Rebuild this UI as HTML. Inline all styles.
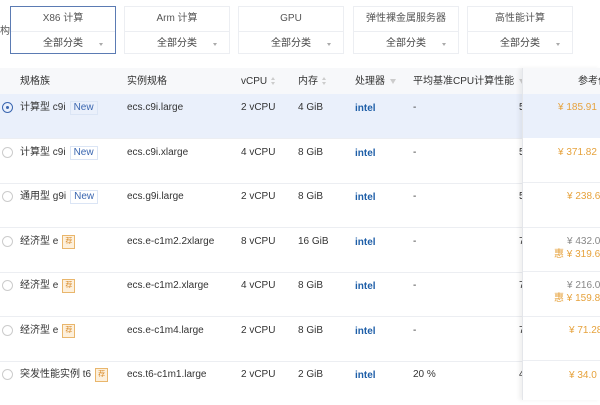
<html><head><style>
body{margin:0;width:600px;height:400px;overflow:hidden;background:#fff;font-family:"Liberation Sans","Noto Sans CJK SC",sans-serif;font-size:10px;color:#333;position:relative}
.a{position:absolute;white-space:nowrap;line-height:13px;height:13px}
.card{position:absolute;top:6px;width:106px;height:48px;border:1px solid #eceef2;box-sizing:border-box;background:#fff}
.card .t{height:24px;line-height:24px;text-align:center;border-bottom:1px solid #eceef2;color:#555;font-size:10px}
.card .s{height:23px;line-height:23px;text-align:center;color:#444;font-size:10px;position:relative}
.card .s:after{content:"";position:absolute;right:12px;top:11px;border:2.5px solid transparent;border-top:3px solid #aaa}
.sel{border:1.5px solid #5b7bb3}
.row{position:absolute;left:0;width:600px;height:44px;border-bottom:1px solid #eceef2}
.radio{position:absolute;left:2px;width:11px;height:11px;border:1px solid #ccc;border-radius:50%;box-sizing:border-box}
.new{display:inline-block;vertical-align:top;border:1px solid #dbe5f5;color:#3a66b0;padding:0 3px;line-height:12px;margin-left:4px;font-size:10px}
.rec{display:inline-block;vertical-align:top;border:1px solid #e9b66c;background:#fdf0dc;color:#d98b2a;width:11px;height:12px;line-height:12px;text-align:center;font-size:7px;margin-left:4px}
.intel{color:#1f5fa8;font-weight:bold;font-size:10px}
.h{color:#333}
.srt{display:inline-block;vertical-align:top;margin-left:4px;width:5px;height:13px;position:relative}
.srt:before{content:"";position:absolute;left:0;top:2px;border:2.5px solid transparent;border-bottom:3px solid #ccc;border-top:0}
.srt:after{content:"";position:absolute;left:0;top:7px;border:2.5px solid transparent;border-top:3px solid #ccc;border-bottom:0}
.flt{display:inline-block;vertical-align:top;margin:4px 0 0 5px;border:3.5px solid transparent;border-top:5px solid #ccc;border-bottom:0}
.fix{position:absolute;left:522px;top:68px;width:78px;height:332px;border-left:1px solid #e4e6ea;box-shadow:-3px 0 4px rgba(0,0,0,.06);background:#fff}
</style></head><body>
<div class="a" style="left:0;top:25px;color:#555">构</div>
<div class="card sel" style="left:10px"><div class="t">X86 计算</div><div class="s">全部分类</div></div>
<div class="card" style="left:124px"><div class="t">Arm 计算</div><div class="s">全部分类</div></div>
<div class="card" style="left:238px"><div class="t">GPU</div><div class="s">全部分类</div></div>
<div class="card" style="left:353px"><div class="t">弹性裸金属服务器</div><div class="s">全部分类</div></div>
<div class="card" style="left:467px"><div class="t">高性能计算</div><div class="s">全部分类</div></div>

<div class="a" style="left:0;top:68px;width:600px;height:26px;background:#f7f8fa;border-bottom:1px solid #eceef2"></div>
<div class="a h" style="left:20px;top:75px">规格族</div>
<div class="a h" style="left:127px;top:75px">实例规格</div>
<div class="a h" style="left:241px;top:75px">vCPU<span class="srt"></span></div>
<div class="a h" style="left:298px;top:75px">内存<span class="srt"></span></div>
<div class="a h" style="left:355px;top:75px">处理器<span class="flt"></span></div>
<div class="a h" style="left:413px;top:75px">平均基准CPU计算性能<span class="flt"></span> 1</div>

<div class="row" style="top:94px;background:#eaf0fb"></div>
<div class="row" style="top:139px"></div>
<div class="row" style="top:183px"></div>
<div class="row" style="top:228px"></div>
<div class="row" style="top:272px"></div>
<div class="row" style="top:317px"></div>
<div class="row" style="top:361px;border:0"></div>

<div class="radio" style="top:102px;border:1.5px solid #3a66b0"><div style="position:absolute;left:2.5px;top:2.5px;width:3.5px;height:3.5px;border-radius:50%;background:#3a66b0"></div></div>
<div class="radio" style="top:147px"></div><div class="radio" style="top:191px"></div><div class="radio" style="top:236px"></div><div class="radio" style="top:280px"></div><div class="radio" style="top:325px"></div><div class="radio" style="top:369px"></div>

<div class="a" style="left:20px;top:101px">计算型 c9i<span class="new">New</span></div>
<div class="a" style="left:20px;top:146px">计算型 c9i<span class="new">New</span></div>
<div class="a" style="left:20px;top:190px">通用型 g9i<span class="new">New</span></div>
<div class="a" style="left:20px;top:235px">经济型 e<span class="rec">荐</span></div>
<div class="a" style="left:20px;top:279px">经济型 e<span class="rec">荐</span></div>
<div class="a" style="left:20px;top:324px">经济型 e<span class="rec">荐</span></div>
<div class="a" style="left:20px;top:368px">突发性能实例 t6<span class="rec">荐</span></div>

<div class="a" style="left:127px;top:101px">ecs.c9i.large</div>
<div class="a" style="left:127px;top:146px">ecs.c9i.xlarge</div>
<div class="a" style="left:127px;top:190px">ecs.g9i.large</div>
<div class="a" style="left:127px;top:235px">ecs.e-c1m2.2xlarge</div>
<div class="a" style="left:127px;top:279px">ecs.e-c1m2.xlarge</div>
<div class="a" style="left:127px;top:324px">ecs.e-c1m4.large</div>
<div class="a" style="left:127px;top:368px">ecs.t6-c1m1.large</div>

<div class="a" style="left:241px;top:101px">2 vCPU</div><div class="a" style="left:298px;top:101px">4 GiB</div>
<div class="a" style="left:241px;top:146px">4 vCPU</div><div class="a" style="left:298px;top:146px">8 GiB</div>
<div class="a" style="left:241px;top:190px">2 vCPU</div><div class="a" style="left:298px;top:190px">8 GiB</div>
<div class="a" style="left:241px;top:235px">8 vCPU</div><div class="a" style="left:298px;top:235px">16 GiB</div>
<div class="a" style="left:241px;top:279px">4 vCPU</div><div class="a" style="left:298px;top:279px">8 GiB</div>
<div class="a" style="left:241px;top:324px">2 vCPU</div><div class="a" style="left:298px;top:324px">8 GiB</div>
<div class="a" style="left:241px;top:368px">2 vCPU</div><div class="a" style="left:298px;top:368px">2 GiB</div>

<div class="a intel" style="left:355px;top:102px">intel</div><div class="a intel" style="left:355px;top:147px">intel</div><div class="a intel" style="left:355px;top:191px">intel</div><div class="a intel" style="left:355px;top:236px">intel</div><div class="a intel" style="left:355px;top:280px">intel</div><div class="a intel" style="left:355px;top:325px">intel</div><div class="a intel" style="left:355px;top:369px">intel</div>

<div class="a" style="left:413px;top:101px">-</div><div class="a" style="left:413px;top:146px">-</div><div class="a" style="left:413px;top:190px">-</div><div class="a" style="left:413px;top:235px">-</div><div class="a" style="left:413px;top:279px">-</div><div class="a" style="left:413px;top:324px">-</div><div class="a" style="left:413px;top:368px">20 %</div>
<div class="a" style="left:519px;top:101px">5</div><div class="a" style="left:519px;top:146px">5</div><div class="a" style="left:519px;top:190px">5</div><div class="a" style="left:519px;top:235px">7</div><div class="a" style="left:519px;top:279px">7</div><div class="a" style="left:519px;top:324px">7</div><div class="a" style="left:519px;top:368px">4</div>

<div class="fix">
<div style="position:absolute;left:0;top:0;width:78px;height:26px;background:#f7f8fa;border-bottom:1px solid #eceef2"></div>
<div style="position:absolute;left:0;top:26px;width:78px;height:44px;background:#eaf0fb"></div>
<div style="position:absolute;left:0;top:70px;width:78px;border-bottom:1px solid #eceef2;height:44px"></div>
<div style="position:absolute;left:0;top:115px;width:78px;border-bottom:1px solid #eceef2;height:44px"></div>
<div style="position:absolute;left:0;top:159px;width:78px;border-bottom:1px solid #eceef2;height:44px"></div>
<div style="position:absolute;left:0;top:204px;width:78px;border-bottom:1px solid #eceef2;height:44px"></div>
<div style="position:absolute;left:0;top:248px;width:78px;border-bottom:1px solid #eceef2;height:44px"></div>
<div class="a h" style="left:55px;top:7px">参考价</div>
<div class="a" style="left:35px;top:33px;color:#e6a23c">¥ 185.91</div>
<div class="a" style="left:35px;top:78px;color:#e6a23c">¥ 371.82</div>
<div class="a" style="left:44px;top:122px;color:#e6a23c">¥ 238.6</div>
<div class="a" style="left:44px;top:167px;color:#888">¥ 432.0</div>
<div class="a" style="left:31px;top:180px;color:#e6a23c">惠 ¥ 319.68</div>
<div class="a" style="left:44px;top:211px;color:#888">¥ 216.0</div>
<div class="a" style="left:31px;top:224px;color:#e6a23c">惠 ¥ 159.84</div>
<div class="a" style="left:46px;top:256px;color:#e6a23c">¥ 71.28</div>
<div class="a" style="left:46px;top:301px;color:#e6a23c">¥ 34.0</div>
</div>
</body></html>
